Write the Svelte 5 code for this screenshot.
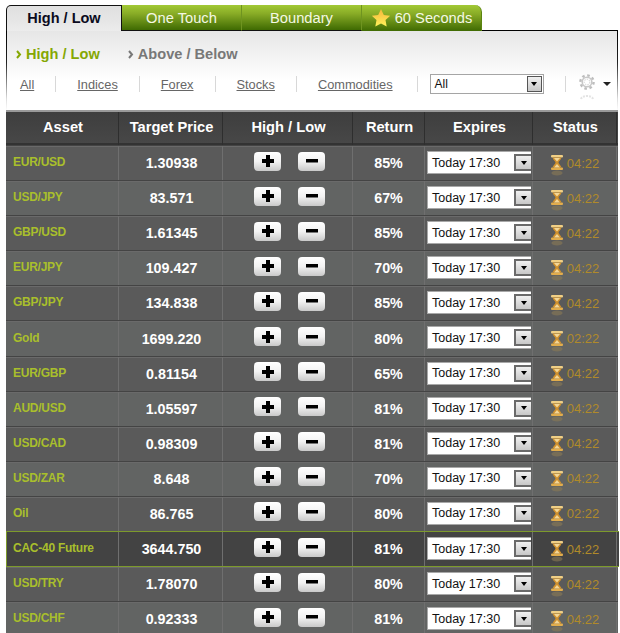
<script lang="ts">
	const tabs = ['One Touch', 'Boundary'];
	const filters = ['All', 'Indices', 'Forex', 'Stocks', 'Commodities'];
	const rows = [
		{ asset: 'EUR/USD', price: '1.30938', ret: '85%', time: '04:22' },
		{ asset: 'USD/JPY', price: '83.571', ret: '67%', time: '04:22' },
		{ asset: 'GBP/USD', price: '1.61345', ret: '85%', time: '04:22' },
		{ asset: 'EUR/JPY', price: '109.427', ret: '70%', time: '04:22' },
		{ asset: 'GBP/JPY', price: '134.838', ret: '85%', time: '04:22' },
		{ asset: 'Gold', price: '1699.220', ret: '80%', time: '02:22' },
		{ asset: 'EUR/GBP', price: '0.81154', ret: '65%', time: '04:22' },
		{ asset: 'AUD/USD', price: '1.05597', ret: '81%', time: '04:22' },
		{ asset: 'USD/CAD', price: '0.98309', ret: '81%', time: '04:22' },
		{ asset: 'USD/ZAR', price: '8.648', ret: '70%', time: '04:22' },
		{ asset: 'Oil', price: '86.765', ret: '80%', time: '02:22' },
		{ asset: 'CAC-40 Future', price: '3644.750', ret: '81%', time: '04:22', active: true },
		{ asset: 'USD/TRY', price: '1.78070', ret: '80%', time: '04:22' },
		{ asset: 'USD/CHF', price: '0.92333', ret: '81%', time: '04:22' }
	];
</script>

{#snippet chevron()}
	<svg class="chev" width="6" height="9" viewBox="0 0 6 9"><path d="M1 1l3 3.500-3 3.500" fill="none" stroke="currentColor" stroke-width="2" /></svg>
{/snippet}

<div class="page">
	<div class="tabs">
		<div class="tab current">High / Low</div>
		{#each tabs as tab}
			<div class="tab">{tab}</div>
		{/each}
		<div class="tab last">
			<svg width="20" height="20" viewBox="0 0 20 20">
				<defs>
					<linearGradient id="star" x1="0" y1="0" x2="0" y2="1">
						<stop offset="0" stop-color="#f5b63a" />
						<stop offset="1" stop-color="#fff25a" />
					</linearGradient>
				</defs>
				<path d="M10 1l2.800 5.900 6.400.8-4.700 4.400 1.200 6.400L10 15.400l-5.700 3.100 1.200-6.400L.8 7.700l6.400-.8z" fill="url(#star)" />
			</svg>
			60 Seconds
		</div>
	</div>

	<div class="panel">
		<div class="subtabs">
			<span class="sub on">{@render chevron()}High / Low</span>
			<span class="sub">{@render chevron()}Above / Below</span>
		</div>
		<div class="filters">
			{#each filters as f}
				<a href="#top">{f}</a>
				<span class="sep"></span>
			{/each}
			<div class="pick">
				<span>All</span>
				<b class="arrow"><u></u></b>
			</div>
			<span class="sep"></span>
			<div class="gear">
				<svg width="16" height="26" viewBox="0 0 16 26">
					<g fill="none">
						<circle cx="8" cy="8" r="6.600" stroke="#bdbdbd" stroke-width="2.400" stroke-dasharray="2.600 2.580" />
						<circle cx="8" cy="8" r="4.800" stroke="#c8c8c8" stroke-width="1.600" />
						<circle cx="8" cy="8" r="2.800" stroke="#dcdcdc" stroke-width="1.200" stroke-dasharray="1.500 1" />
					</g>
					<path d="M2 25c1-4 11-4 12 0" fill="none" stroke="#e4e4e4" stroke-width="2" stroke-dasharray="2 1" />
				</svg>
				<u></u>
			</div>
		</div>
	</div>

	<div class="table">
		<div class="row head">
			<div>Asset</div>
			<div>Target Price</div>
			<div>High / Low</div>
			<div>Return</div>
			<div>Expires</div>
			<div>Status</div>
		</div>
		{#each rows as r, i}
			<div class="row" class:alt={i % 2 === 1} class:active={r.active}>
				<div class="asset">{r.asset}</div>
				<div class="price">{r.price}</div>
				<div class="btns">
					<span class="btn">
						<svg width="12" height="12" viewBox="0 0 12 12"><path d="M4 0h4v4h4v4H8v4H4V8H0V4h4z" fill="#000" /></svg>
					</span>
					<span class="btn">
						<svg width="12" height="12" viewBox="0 0 12 12"><rect y="4" width="12" height="3.500" fill="#000" /></svg>
					</span>
				</div>
				<div>{r.ret}</div>
				<div class="expires">
					<div class="sel">
						<span>Today 17:30</span>
						<b class="arrow"><u></u></b>
					</div>
				</div>
				<div class="status">
					<svg width="14" height="21" viewBox="0 0 14 21">
						<rect x="1" y="0" width="12" height="2.500" rx="1" fill="#f0cf85" />
						<rect x="1" y="12.500" width="12" height="2.500" rx="1" fill="#e2ad4c" />
						<path d="M2.500 2.500h9C11 5 8.500 6 8.500 7.500S11 10 11.500 12.500h-9C3 10 5.500 9 5.500 7.500S3 5 2.500 2.500z" fill="#d0912e" />
						<path d="M4 3h6L7 6.500zM7 9l3 3.500H4z" fill="#f3d696" />
						<ellipse cx="7" cy="18" rx="5.500" ry="2.500" fill="#8a7a55" opacity="0.6" />
					</svg>
					<span>{r.time}</span>
				</div>
			</div>
		{/each}
	</div>
</div>

<style>
	:global(body) {
		background: #fff;
		overflow: hidden;
	}

	.page {
		width: 620px;
		height: 633px;
		overflow: hidden;
		font-family: 'Liberation Sans', Arial, sans-serif;
		padding: 5px 2px 0 6px;
		box-sizing: border-box;
	}

	.tabs {
		display: flex;
		height: 26px;
		position: relative;
		z-index: 1;
	}

	.tab {
		width: 120px;
		box-sizing: border-box;
		display: flex;
		align-items: center;
		justify-content: center;
		gap: 4px;
		font-size: 14.700px;
		color: #f4f8e4;
		background: linear-gradient(#a2c935, #88ab26 35%, #3f6a02);
		border-right: 1px solid #6f9420;
		border-bottom: 1px solid #111;
	}

	.tab.current {
		width: 116px;
		height: 26px;
		font-weight: bold;
		font-size: 14.500px;
		color: #0b0b20;
		background: linear-gradient(#e0e0e0, #e6e6e6 60%, #ececec);
		border: 1px solid #111;
		border-width: 1px 1px 0 1px;
		border-radius: 5px 0 0 0;
		padding-bottom: 2px;
	}

	.tab.last {
		border-radius: 0 7px 0 0;
		border-right: 1px solid #5b8410;
		border-bottom: 0;
	}

	.panel {
		height: 80px;
		box-sizing: border-box;
		border-style: solid;
		border-width: 1px 1px 0 1px;
		border-image: linear-gradient(#000, #222 40%, #ddd 85%, #fff) 1;
		margin-top: -1px;
		background: linear-gradient(#e6e6e6, #fff 62%);
		padding: 14px 0 0 9px;
	}

	.subtabs {
		display: flex;
		gap: 28px;
		font-size: 14.600px;
		font-weight: bold;
		color: #787878;
		line-height: 18px;
	}

	.sub {
		display: flex;
		align-items: center;
		gap: 4px;
	}

	.sub.on {
		color: #85a804;
	}

	.filters {
		display: flex;
		align-items: center;
		gap: 21px;
		margin: 11px 0 0 4px;
		height: 20px;
	}

	.filters a {
		font-size: 12.800px;
		color: #666;
		text-decoration: underline;
	}

	.filters a:last-of-type {
		margin-right: 3px;
	}

	.sep {
		width: 1px;
		height: 16px;
		background: #d8d8d8;
	}

	.pick {
		width: 114px;
		height: 20px;
		box-sizing: border-box;
		margin-left: -9px;
		border: 1px solid #a5a5a5;
		background: #fff;
		display: flex;
		align-items: center;
		justify-content: space-between;
		padding: 0 1px 0 4px;
		font-size: 12px;
		color: #111;
	}

	.arrow {
		width: 15px;
		height: 16px;
		box-sizing: border-box;
		border: 1px solid #555;
		background: linear-gradient(#f0f0f0, #c8c8c8);
		display: flex;
		align-items: center;
		justify-content: center;
	}

	.arrow u {
		border: 3.500px solid transparent;
		border-top: 4px solid #000;
		border-bottom: 0;
	}

	.gear {
		display: flex;
		align-items: center;
		gap: 8px;
		margin-left: -8px;
		margin-top: 6px;
	}

	.gear u {
		border: 4px solid transparent;
		border-top: 4px solid #222;
		border-bottom: 0;
		margin-top: -6px;
	}

	.row {
		display: grid;
		grid-template-columns: 113px 104px 130px 72px 108px 84px;
		height: 35.100px;
		box-sizing: border-box;
		background: #5a5a5a;
		color: #fff;
		font-size: 14.300px;
		font-weight: bold;
		border-top: 1px solid #444;
		box-shadow: inset 0 1px 0 #6a6a6a;
	}

	.row.alt {
		background: #626463;
	}

	.row > div {
		display: flex;
		align-items: center;
		justify-content: center;
		border-right: 1px solid #6f6f6f;
		box-sizing: border-box;
	}

	.row.head {
		height: 35px;
		font-size: 14.670px;
		background: linear-gradient(#3e3e3e, #484848);
		border-top: 2px solid #999;
		box-shadow: inset 0 -2px 0 #333;
	}

	.row.head > div {
		border-right: 1px solid #2e2e2e;
		padding: 0 0 3px 2px;
	}

	.row.active {
		background: #434343;
		border-top: 1px solid #7d9a2c;
		border-bottom: 1px solid #7d9a2c;
		box-shadow: inset 1px 0 0 #7d9a2c;
		margin-right: -1px;
		height: 36px;
		margin-bottom: -0.900px;
		position: relative;
	}

	.row > .asset {
		justify-content: flex-start;
		padding: 0 0 2px 7px;
		font-size: 12px;
		letter-spacing: -0.250px;
		color: #a9bf2c;
	}

	.row > .price {
		padding-left: 2px;
	}

	.btns {
		gap: 17px;
		padding: 0 0 4px 4px;
	}

	.btn {
		width: 27px;
		height: 19px;
		border-radius: 4px;
		background: linear-gradient(#fff, #f2f2f2 50%, #c9c9c9);
		display: flex;
		align-items: center;
		justify-content: center;
	}

	.row > .expires {
		justify-content: flex-start;
		padding-left: 2px;
		align-items: flex-start;
		padding-top: 5px;
		font-weight: normal;
	}

	.sel {
		width: 104px;
		height: 23px;
		box-sizing: border-box;
		background: #fff;
		border: 1px solid #a8a8a8;
		border-right: 0;
		display: flex;
		align-items: center;
		justify-content: space-between;
		padding: 0 0 0 4px;
		font-size: 12.500px;
		color: #111;
	}

	.sel .arrow {
		border: 2px solid #6a6a6a;
		border-right: 0;
		width: 17px;
		height: 17px;
	}

	.row > .status {
		gap: 3px;
		font-weight: normal;
		font-size: 13px;
		color: #b08a2a;
	}

	.status svg {
		margin-top: 5px;
	}
</style>
